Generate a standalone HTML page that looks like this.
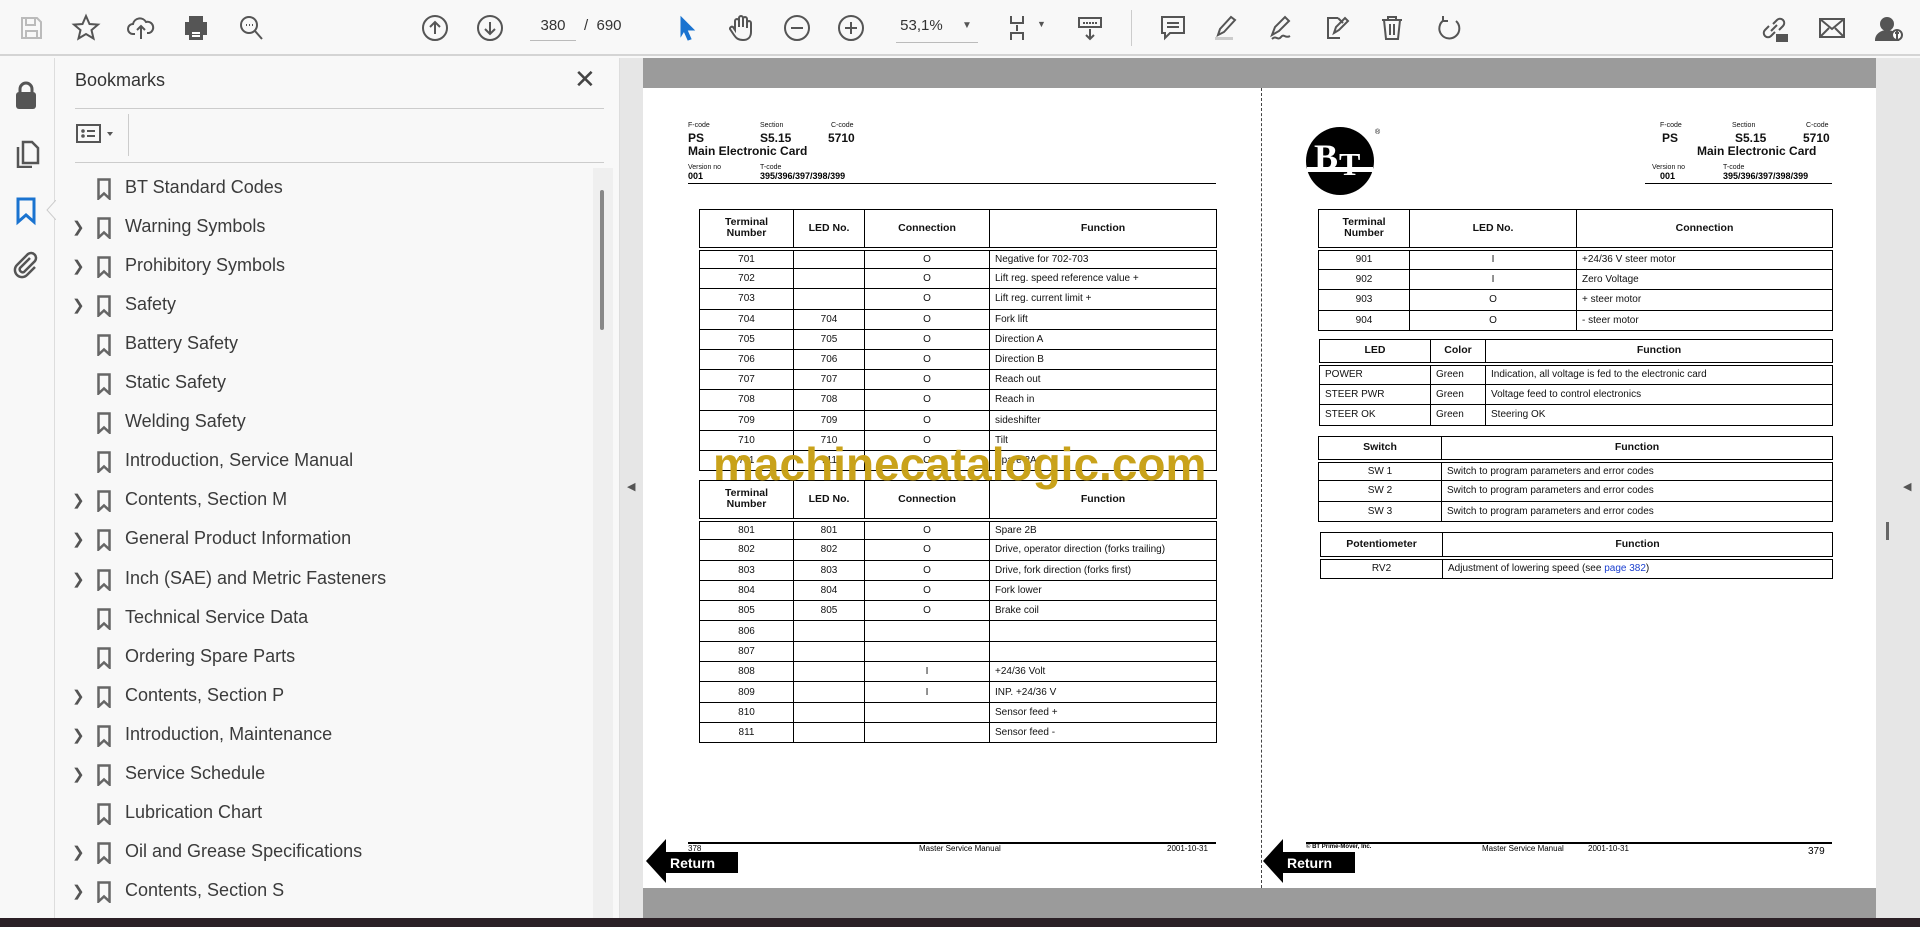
<!DOCTYPE html>
<html><head><meta charset="utf-8"><style>
*{margin:0;padding:0;box-sizing:border-box}
body{width:1920px;height:927px;overflow:hidden;background:#f8f8f8;font-family:"Liberation Sans",Arial,sans-serif;position:relative}
.a{position:absolute}
.tb{left:0;top:0;width:1920px;height:56px;background:#f8f8f8;border-bottom:2px solid #d4d4d4}
.ic{position:absolute;top:13px;width:30px;height:30px}
.ic svg{width:30px;height:30px;fill:none;stroke:#555;stroke-width:2}
.bm{position:absolute;left:125px;font-size:18px;color:#3b3b3b;white-space:nowrap}
.bmi{position:absolute;left:97px;width:14px;height:22px}
.chev{position:absolute;left:72px;font-size:15px;color:#555}
.pg{background:#fff}
table{position:absolute;border-collapse:collapse;table-layout:fixed;font-size:10px;color:#111}
td{border:1px solid #000;text-align:center;padding:0;line-height:11px}
td.l{text-align:left;padding-left:5px}
tr.h td{font-weight:bold;font-size:10.5px;border-bottom:4px double #000}
.s{font-size:7px;color:#111}
.b{font-weight:bold;font-size:12px;color:#111}
.ret{position:absolute;width:92px;height:44px}
</style></head><body>

<div class="a tb"></div>
<!-- toolbar icons -->
<div class="ic" style="left:16px"><svg viewBox="0 0 30 30"><path d="M6 5h15l4 4v16H6z M10 5v7h9V5 M10 25v-7h11v7" stroke="#bbb"/></svg></div>
<div class="ic" style="left:71px"><svg viewBox="0 0 30 30"><path d="M15 3l3.5 8 8.5.6-6.5 5.5 2 8.4L15 21l-7.5 4.5 2-8.4L3 11.6l8.5-.6z"/></svg></div>
<div class="ic" style="left:126px"><svg viewBox="0 0 30 30"><path d="M9 21H7a5 5 0 010-10 7 7 0 0113-2 5 5 0 013 11h-2 M15 26V13 M11 17l4-4 4 4"/></svg></div>
<div class="ic" style="left:181px"><svg viewBox="0 0 30 30"><path d="M9 10V4h12v6 M5 10h20v11H5z M9 17h12v9H9z" fill="#555"/><path d="M11 20h8 M11 23h8" stroke="#fff"/></svg></div>
<div class="ic" style="left:236px"><svg viewBox="0 0 30 30"><circle cx="13" cy="12" r="8"/><path d="M19 18l7 8"/><path d="M10 12h1 M13 12h1 M16 12h1"/></svg></div>
<div class="ic" style="left:420px"><svg viewBox="0 0 30 30"><circle cx="15" cy="15" r="12"/><path d="M15 21V9 M10 14l5-5 5 5"/></svg></div>
<div class="ic" style="left:475px"><svg viewBox="0 0 30 30"><circle cx="15" cy="15" r="12"/><path d="M15 9v12 M10 16l5 5 5-5"/></svg></div>
<div class="a" style="left:530px;top:17px;width:46px;height:24px;border-bottom:1px solid #bbb;font-size:15px;color:#333;text-align:center">380</div>
<div class="a" style="left:584px;top:17px;font-size:15px;color:#333">/&nbsp; 690</div>
<div class="ic" style="left:672px"><svg viewBox="0 0 30 30"><path d="M9 4l13 13h-7l4 9-3 1-4-9-3 5z" fill="#1a73d0" stroke="#1a73d0" stroke-width="1"/></svg></div>
<div class="ic" style="left:726px"><svg viewBox="0 0 30 30"><path d="M9 17V8a2 2 0 014 0v6V5a2 2 0 014 0v9V6a2 2 0 014 0v9-5a2 2 0 014 0v9c0 5-3 8-8 8s-7-2-9-5l-4-6a2 2 0 013-2z"/></svg></div>
<div class="ic" style="left:782px"><svg viewBox="0 0 30 30"><circle cx="15" cy="15" r="12"/><path d="M9 15h12"/></svg></div>
<div class="ic" style="left:836px"><svg viewBox="0 0 30 30"><circle cx="15" cy="15" r="12"/><path d="M9 15h12 M15 9v12"/></svg></div>
<div class="a" style="left:896px;top:17px;width:82px;height:26px;border-bottom:1px solid #bbb;font-size:15px;color:#333">&nbsp;53,1% <span style="position:absolute;left:66px;font-size:10px;top:3px;color:#555">▼</span></div>
<div class="ic" style="left:1005px"><svg viewBox="0 0 30 30"><path d="M6 3v7h12V3 M6 27v-7h12v7 M12 12v6"/></svg><span style="position:absolute;left:32px;top:6px;font-size:9px;color:#555">▼</span></div>
<div class="ic" style="left:1075px"><svg viewBox="0 0 30 30"><path d="M4 5h22v9H4z M15 16v10 M11 22l4 4 4-4"/><path d="M8 10h14" stroke-dasharray="2 1"/></svg></div>
<div class="a" style="left:1131px;top:10px;width:1px;height:36px;background:#ccc"></div>
<div class="ic" style="left:1158px"><svg viewBox="0 0 30 30"><path d="M4 4h22v16H12l-5 5v-5H4z M9 10h12 M9 14h12"/></svg></div>
<div class="ic" style="left:1210px"><svg viewBox="0 0 30 30"><path d="M8 22l2-6L21 4l4 3-11 12z"/><path d="M5 24h18v3H5z" fill="#ccc" stroke="none"/></svg></div>
<div class="ic" style="left:1266px"><svg viewBox="0 0 30 30"><path d="M6 22l3-8 10-10 4 4-10 10z M6 26c4-4 6 2 9-2s4 2 9-1"/></svg></div>
<div class="ic" style="left:1322px"><svg viewBox="0 0 30 30"><path d="M16 5H6v20h12 M16 5l5 5 M12 20l2-6 9-9 3 3-9 9z"/></svg></div>
<div class="ic" style="left:1377px"><svg viewBox="0 0 30 30"><path d="M5 7h20 M11 7V4h8v3 M7 7l2 19h12l2-19 M13 11v11 M17 11v11"/></svg></div>
<div class="ic" style="left:1434px"><svg viewBox="0 0 30 30"><path d="M22 8a10 10 0 11-12-1 M9 3v5h5" /></svg></div>
<div class="ic" style="left:1759px"><svg viewBox="0 0 30 30"><path d="M12 18l6-6 M10 13l-4 4a4 4 0 006 6l4-4 M20 17l4-4a4 4 0 00-6-6l-4 4"/><path d="M18 22h10v6H18z" fill="#555"/></svg></div>
<div class="ic" style="left:1817px"><svg viewBox="0 0 30 30"><path d="M3 6h24v18H3z M3 6l12 10 12-10 M3 24l9-9 M27 24l-9-9"/></svg></div>
<div class="ic" style="left:1873px"><svg viewBox="0 0 30 30"><circle cx="14" cy="11" r="6" fill="#555"/><path d="M3 27a11 9 0 0122 0z" fill="#555"/><circle cx="24" cy="22" r="5" fill="#fff"/><path d="M22 20h4 M24 18v8" stroke-width="2"/></svg></div>

<!-- left icon strip -->
<div class="a" style="left:0;top:58px;width:55px;height:860px;background:#f8f8f8;border-right:1px solid #ddd"></div>
<svg class="a" style="left:14px;top:80px" width="24" height="30" viewBox="0 0 24 30"><path d="M6 13V9a6 6 0 0112 0v4" fill="none" stroke="#555" stroke-width="3"/><rect x="2" y="12" width="20" height="17" rx="3" fill="#555"/></svg>
<svg class="a" style="left:14px;top:138px" width="26" height="30" viewBox="0 0 26 30"><path d="M9 4h9l6 6v15H9z M4 9v20h14" fill="none" stroke="#555" stroke-width="2.5"/></svg>
<svg class="a" style="left:15px;top:196px" width="22" height="30" viewBox="0 0 22 30"><path d="M3 3h16v23l-8-7-8 7z" fill="none" stroke="#1a73d0" stroke-width="3"/></svg>
<svg class="a" style="left:46px;top:200px" width="10" height="20"><path d="M10 0L1 10l9 10" fill="#f8f8f8" stroke="#ccc"/></svg>
<svg class="a" style="left:12px;top:250px" width="28" height="30" viewBox="0 0 28 30"><path d="M18 8L8 18a3 3 0 004 4l11-11a5 5 0 00-7-7L5 15a7 7 0 0010 10l8-8" fill="none" stroke="#555" stroke-width="2.5"/></svg>

<!-- bookmarks panel -->
<div class="a" style="left:75px;top:70px;font-size:18px;color:#333">Bookmarks</div>
<div class="a" style="left:574px;top:64px;font-size:26px;color:#444;line-height:30px">✕</div>
<div class="a" style="left:75px;top:108px;width:529px;height:1px;background:#ccc"></div>
<svg class="a" style="left:76px;top:123px" width="46" height="20"><rect x="1" y="2" width="23" height="17" fill="none" stroke="#555" stroke-width="2"/><circle cx="7" cy="8" r="1.8" fill="#555"/><circle cx="7" cy="13" r="1.8" fill="#555"/><path d="M11 8h8 M11 13h8" stroke="#555" stroke-width="2"/><path d="M31 9h6l-3 4z" fill="#555"/></svg>
<div class="a" style="left:128px;top:114px;width:1px;height:42px;background:#ccc"></div>
<div class="a" style="left:75px;top:162px;width:529px;height:1px;background:#ccc"></div>
<div class="a" style="left:593px;top:168px;width:20px;height:750px;background:#efefef"></div>
<div class="a" style="left:600px;top:190px;width:4px;height:140px;background:#888;border-radius:2px"></div>
<div class="a" style="left:619px;top:58px;width:24px;height:860px;background:#e6e6e6;border-left:1px solid #ddd"></div>
<div class="a" style="left:627px;top:480px;font-size:11px;color:#555">◀</div>
<div class="a" style="left:1876px;top:58px;width:44px;height:860px;background:#e6e6e6"></div>
<div class="a" style="left:1903px;top:480px;font-size:11px;color:#555">◀</div>
<div class="a" style="left:1886px;top:522px;width:3px;height:18px;background:#666"></div>

<div id="bms"></div>
<script>
var items=[["BT Standard Codes",0],["Warning Symbols",1],["Prohibitory Symbols",1],["Safety",1],["Battery Safety",0],["Static Safety",0],["Welding Safety",0],["Introduction, Service Manual",0],["Contents, Section M",1],["General Product Information",1],["Inch (SAE) and Metric Fasteners",1],["Technical Service Data",0],["Ordering Spare Parts",0],["Contents, Section P",1],["Introduction, Maintenance",1],["Service Schedule",1],["Lubrication Chart",0],["Oil and Grease Specifications",1],["Contents, Section S",1]];
var h="";items.forEach(function(it,i){var y=189+i*39.05;
h+='<svg class="bmi" style="top:'+(y-11)+'px" viewBox="0 0 14 22"><path d="M1.5 1.5h11v19l-5.5-5-5.5 5z" fill="none" stroke="#666" stroke-width="2.5"/></svg>';
if(it[1])h+='<div class="chev" style="top:'+(y-10)+'px">❯</div>';
h+='<div class="bm" style="top:'+(y-12)+'px">'+it[0]+'</div>';});
document.getElementById("bms").innerHTML=h;
</script>

<!-- document area -->
<div class="a" style="left:643px;top:58px;width:1233px;height:860px;background:#9b9b9b"></div>
<div class="a pg" style="left:643px;top:88px;width:1233px;height:800px"></div>
<div class="a" style="left:1261px;top:88px;height:800px;border-left:1px dashed #444"></div>
<div class="a" style="left:0;top:918px;width:1920px;height:9px;background:#2b2026"></div>

<!-- left page header -->
<div class="a s" style="left:688px;top:122px">F-code</div>
<div class="a s" style="left:760px;top:122px">Section</div>
<div class="a s" style="left:831px;top:122px">C-code</div>
<div class="a b" style="left:688px;top:131px">PS</div>
<div class="a b" style="left:760px;top:131px">S5.15</div>
<div class="a b" style="left:828px;top:131px">5710</div>
<div class="a b" style="left:688px;top:144px">Main Electronic Card</div>
<div class="a s" style="left:688px;top:164px">Version no</div>
<div class="a s" style="left:760px;top:164px">T-code</div>
<div class="a" style="left:688px;top:171px;font-size:9px;font-weight:bold">001</div>
<div class="a" style="left:760px;top:171px;font-size:9px;font-weight:bold">395/396/397/398/399</div>
<div class="a" style="left:688px;top:183px;width:528px;height:1px;background:#000"></div>

<table style="left:699px;top:209px;width:517px">
<colgroup><col style="width:94px"><col style="width:71px"><col style="width:125px"><col style="width:227px"></colgroup>
<tr class="h" style="height:39px"><td>Terminal<br>Number</td><td>LED No.</td><td>Connection</td><td>Function</td></tr>
<tr style="height:20.2px"><td>701</td><td></td><td>O</td><td class="l">Negative for 702-703</td></tr>
<tr style="height:20.2px"><td>702</td><td></td><td>O</td><td class="l">Lift reg. speed reference value +</td></tr>
<tr style="height:20.2px"><td>703</td><td></td><td>O</td><td class="l">Lift reg. current limit +</td></tr>
<tr style="height:20.2px"><td>704</td><td>704</td><td>O</td><td class="l">Fork lift</td></tr>
<tr style="height:20.2px"><td>705</td><td>705</td><td>O</td><td class="l">Direction A</td></tr>
<tr style="height:20.2px"><td>706</td><td>706</td><td>O</td><td class="l">Direction B</td></tr>
<tr style="height:20.2px"><td>707</td><td>707</td><td>O</td><td class="l">Reach out</td></tr>
<tr style="height:20.2px"><td>708</td><td>708</td><td>O</td><td class="l">Reach in</td></tr>
<tr style="height:20.2px"><td>709</td><td>709</td><td>O</td><td class="l">sideshifter</td></tr>
<tr style="height:20.2px"><td>710</td><td>710</td><td>O</td><td class="l">Tilt</td></tr>
<tr style="height:20.2px"><td>711</td><td>711</td><td>O</td><td class="l">Spare 2A</td></tr>
</table>

<table style="left:699px;top:480px;width:517px">
<colgroup><col style="width:94px"><col style="width:71px"><col style="width:125px"><col style="width:227px"></colgroup>
<tr class="h" style="height:39px"><td>Terminal<br>Number</td><td>LED No.</td><td>Connection</td><td>Function</td></tr>
<tr style="height:20.3px"><td>801</td><td>801</td><td>O</td><td class="l">Spare 2B</td></tr>
<tr style="height:20.3px"><td>802</td><td>802</td><td>O</td><td class="l">Drive, operator direction (forks trailing)</td></tr>
<tr style="height:20.3px"><td>803</td><td>803</td><td>O</td><td class="l">Drive, fork direction (forks first)</td></tr>
<tr style="height:20.3px"><td>804</td><td>804</td><td>O</td><td class="l">Fork lower</td></tr>
<tr style="height:20.3px"><td>805</td><td>805</td><td>O</td><td class="l">Brake coil</td></tr>
<tr style="height:20.3px"><td>806</td><td></td><td></td><td class="l"></td></tr>
<tr style="height:20.3px"><td>807</td><td></td><td></td><td class="l"></td></tr>
<tr style="height:20.3px"><td>808</td><td></td><td>I</td><td class="l">+24/36 Volt</td></tr>
<tr style="height:20.3px"><td>809</td><td></td><td>I</td><td class="l">INP. +24/36 V</td></tr>
<tr style="height:20.3px"><td>810</td><td></td><td></td><td class="l">Sensor feed +</td></tr>
<tr style="height:20.3px"><td>811</td><td></td><td></td><td class="l">Sensor feed -</td></tr>
</table>

<div class="a" style="left:713px;top:439px;font-size:46px;font-weight:bold;color:#c9a21a;line-height:50px;white-space:nowrap">machinecatalogic.com</div>

<!-- right page header -->
<svg class="a" style="left:1305px;top:125px" width="80" height="72" viewBox="0 0 80 72"><circle cx="35" cy="36" r="34" fill="#000"/><rect x="2" y="42" width="66" height="5" fill="#fff"/><text x="9" y="44" font-family="Liberation Serif,serif" font-weight="bold" font-size="36" fill="#fff">B</text><text x="34" y="50" font-family="Liberation Serif,serif" font-weight="bold" font-size="32" fill="#fff">T</text><text x="70" y="9" font-size="7" fill="#000">®</text></svg>
<div class="a s" style="left:1660px;top:122px">F-code</div>
<div class="a s" style="left:1732px;top:122px">Section</div>
<div class="a s" style="left:1806px;top:122px">C-code</div>
<div class="a b" style="left:1662px;top:131px">PS</div>
<div class="a b" style="left:1735px;top:131px">S5.15</div>
<div class="a b" style="left:1803px;top:131px">5710</div>
<div class="a b" style="left:1697px;top:144px">Main Electronic Card</div>
<div class="a s" style="left:1652px;top:164px">Version no</div>
<div class="a s" style="left:1723px;top:164px">T-code</div>
<div class="a" style="left:1660px;top:171px;font-size:9px;font-weight:bold">001</div>
<div class="a" style="left:1723px;top:171px;font-size:9px;font-weight:bold">395/396/397/398/399</div>
<div class="a" style="left:1645px;top:183px;width:187px;height:1px;background:#000"></div>

<table style="left:1318px;top:209px;width:514px">
<colgroup><col style="width:91px"><col style="width:167px"><col style="width:256px"></colgroup>
<tr class="h" style="height:39px"><td>Terminal<br>Number</td><td>LED No.</td><td>Connection</td></tr>
<tr style="height:20.5px"><td>901</td><td>I</td><td class="l">+24/36 V steer motor</td></tr>
<tr style="height:20.5px"><td>902</td><td>I</td><td class="l">Zero Voltage</td></tr>
<tr style="height:20.5px"><td>903</td><td>O</td><td class="l">+ steer motor</td></tr>
<tr style="height:20.5px"><td>904</td><td>O</td><td class="l">- steer motor</td></tr>
</table>

<table style="left:1319px;top:339px;width:513px">
<colgroup><col style="width:111px"><col style="width:55px"><col style="width:347px"></colgroup>
<tr class="h" style="height:24px"><td>LED</td><td>Color</td><td>Function</td></tr>
<tr style="height:20.5px"><td class="l">POWER</td><td class="l">Green</td><td class="l">Indication, all voltage is fed to the electronic card</td></tr>
<tr style="height:20.5px"><td class="l">STEER PWR</td><td class="l">Green</td><td class="l">Voltage feed to control electronics</td></tr>
<tr style="height:20.5px"><td class="l">STEER OK</td><td class="l">Green</td><td class="l">Steering OK</td></tr>
</table>

<table style="left:1318px;top:436px;width:514px">
<colgroup><col style="width:123px"><col style="width:391px"></colgroup>
<tr class="h" style="height:24px"><td>Switch</td><td>Function</td></tr>
<tr style="height:20.3px"><td>SW 1</td><td class="l">Switch to program parameters and error codes</td></tr>
<tr style="height:20.3px"><td>SW 2</td><td class="l">Switch to program parameters and error codes</td></tr>
<tr style="height:20.3px"><td>SW 3</td><td class="l">Switch to program parameters and error codes</td></tr>
</table>

<table style="left:1320px;top:532px;width:512px">
<colgroup><col style="width:122px"><col style="width:390px"></colgroup>
<tr class="h" style="height:25px"><td>Potentiometer</td><td>Function</td></tr>
<tr style="height:21px"><td>RV2</td><td class="l">Adjustment of lowering speed (see <span style="color:#1a3fd0">page 382</span>)</td></tr>
</table>

<!-- footers -->
<div class="a" style="left:688px;top:842px;width:528px;height:2px;background:#000"></div>
<div class="a" style="left:688px;top:844px;font-size:8px">378</div>
<div class="a" style="left:919px;top:844px;font-size:8px">Master Service Manual</div>
<div class="a" style="left:1167px;top:844px;font-size:8px">2001-10-31</div>
<div class="a" style="left:1306px;top:842px;width:526px;height:2px;background:#000"></div>
<div class="a" style="left:1306px;top:844px;font-size:6px;font-weight:bold">© BT Prime-Mover, Inc.</div>
<div class="a" style="left:1482px;top:844px;font-size:8px">Master Service Manual</div>
<div class="a" style="left:1588px;top:844px;font-size:8px">2001-10-31</div>
<div class="a" style="left:1808px;top:846px;font-size:10px">379</div>

<svg class="ret" style="left:646px;top:839px" viewBox="0 0 92 44"><path d="M0 22L20 0v13h72v21H20v10z" fill="#000"/><text x="24" y="29" font-family="Liberation Sans,sans-serif" font-weight="bold" font-size="14" fill="#fff">Return</text></svg>
<svg class="ret" style="left:1263px;top:839px" viewBox="0 0 92 44"><path d="M0 22L20 0v13h72v21H20v10z" fill="#000"/><text x="24" y="29" font-family="Liberation Sans,sans-serif" font-weight="bold" font-size="14" fill="#fff">Return</text></svg>

</body></html>
